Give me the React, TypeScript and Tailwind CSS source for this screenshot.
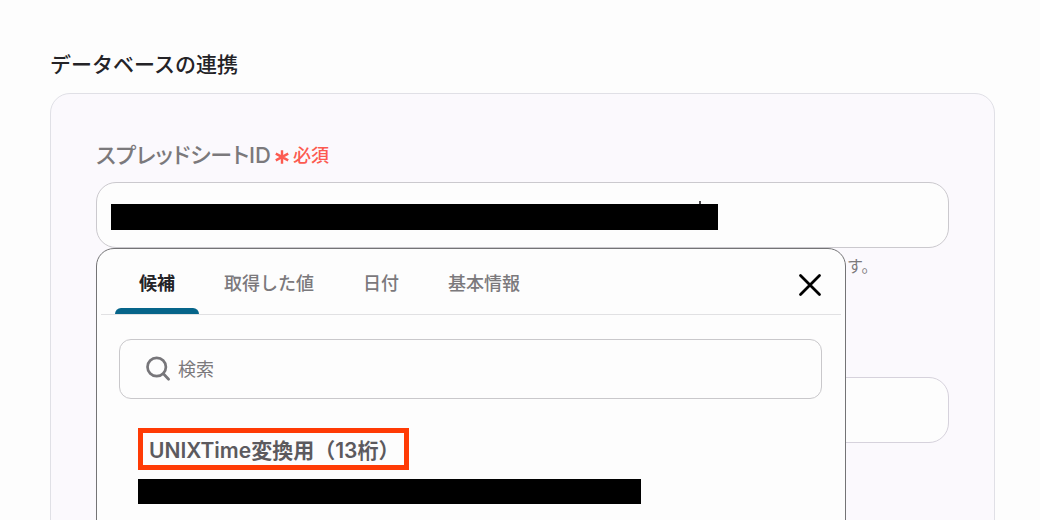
import { useState } from "react";

const tabs = ["候補", "取得した値", "日付", "基本情報"];

function SuggestionPanel() {
  const [active, setActive] = useState(0);
  return (
    <div className="absolute top-full left-0 z-10 h-[400px] w-[750px] rounded-[18px] border border-[#747476] bg-[#fdfdfd]">
      <div className="mx-1 flex justify-between border-b border-[#e1e1e3] pr-[19px] pl-[14px]">
        <div role="tablist" className="flex gap-px">
          {tabs.map((tab, index) => (
            <button
              key={tab}
              type="button"
              role="tab"
              aria-selected={index === active}
              onClick={() => setActive(index)}
              className={
                index === active
                  ? "flex flex-col items-stretch text-[18px] leading-[27px] font-bold text-[#242327]"
                  : "flex flex-col items-stretch text-[18px] leading-[27px] font-medium text-[#7b797c]"
              }
            >
              <span className="px-6 pt-[21px] pb-[11px]">{tab}</span>
              <span
                className={
                  index === active
                    ? "h-[6px] rounded-t-[6px] bg-[#06658a]"
                    : "h-[6px]"
                }
              />
            </button>
          ))}
        </div>
        <button type="button" aria-label="閉じる" className="flex items-center pt-[6px]">
          <svg viewBox="0 0 24 24" className="size-6" fill="none" stroke="#000" strokeWidth="2.8" strokeLinecap="round">
            <path d="M2.5 2.5l19 19M21.5 2.5l-19 19" />
          </svg>
        </button>
      </div>

      <div className="pt-6 pr-[23px] pl-[22px]">
        <label className="flex h-[60px] items-center gap-2 rounded-xl border border-[#c9c8cb] px-[26px]">
          <svg viewBox="0 0 24 24" className="size-6 shrink-0 overflow-visible" fill="none" stroke="#77767a" strokeWidth="2.7" strokeLinecap="round">
            <circle cx="10.7" cy="10" r="9.2" />
            <path d="M17.4 16.8l5.2 5.4" />
          </svg>
          <input
            type="search"
            aria-label="検索"
            placeholder="検索"
            className="min-w-0 flex-1 bg-transparent text-[18px] font-normal outline-none placeholder:text-[#7b797c]"
          />
        </label>

        <div className="flex flex-col items-start gap-[9px] px-[19px] pt-[29px]">
          <button
            type="button"
            className="flex h-[42px] w-[271px] items-center border-[5px] border-[#ff3b05] px-[6px] pt-1 text-[21px] leading-[28px] font-semibold whitespace-nowrap text-[#5c5a5e]"
          >
            UNIXTime変換用（13桁）
          </button>
          <div className="h-[25px] w-[503px] bg-black" />
        </div>
      </div>
    </div>
  );
}

export default function App() {
  return (
    <main className="h-screen overflow-hidden bg-[#fdfdfd] pt-12 pr-[45px] pl-[50px] font-['Inter','Noto_Sans_CJK_JP',sans-serif]">
      <h1 className="text-[21px] leading-[34px] font-medium text-[#242327]">
        データベースの連携
      </h1>
      <section className="mt-[11px] h-[700px] rounded-[20px] border border-[#e0e0e6] bg-[#fbf9fd] px-[45px] pt-[45px]">
        <label htmlFor="sheet-id" className="flex h-8 items-center gap-1 text-[22px] font-medium text-[#7b797c]">
          <span className="[font-feature-settings:'palt']">スプレッドシートID</span>
          <span className="flex items-center gap-1 text-[18px] text-[#fc5b50]">
            <svg viewBox="0 0 14 14" className="mt-1 size-[14px]" fill="none" stroke="currentColor" strokeWidth="2.4">
              <path d="M7 0.2v13.6M0.8 3.6l12.4 6.8M13.2 3.6L0.8 10.4" />
            </svg>
            必須
          </span>
        </label>
        <div className="relative mt-[11px]">
          <input
            id="sheet-id"
            type="text"
            className="block h-[66px] w-full rounded-[20px] border border-[#cbc9ce] bg-[#fdfdfd] px-[14px] text-[21px] outline-none"
          />
          <div className="absolute top-[19px] left-[603px] h-[3px] w-[2px] bg-[#4b4a4d]" />
          <div className="absolute top-[22px] left-[15px] h-[26px] w-[607px] bg-black" />
          <SuggestionPanel />
        </div>
        <p className="mt-[6px] pl-[751px] text-[16px] leading-6 whitespace-nowrap text-[#7b797c]">す。</p>
        <input
          type="text"
          aria-label="シート"
          className="mt-[99px] block h-[66px] w-full rounded-[20px] border border-[#d6d2dc] bg-[#fdfdfd] px-[14px] text-[21px] outline-none"
        />
      </section>
    </main>
  );
}
